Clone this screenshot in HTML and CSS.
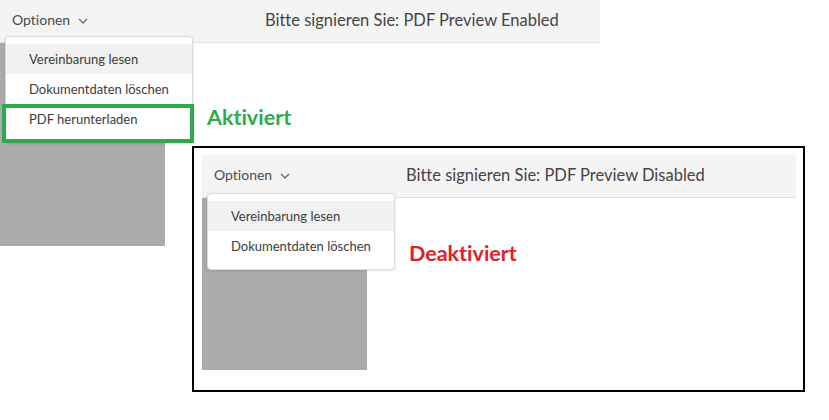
FILE: index.html
```html
<!DOCTYPE html>
<html lang="de">
<head>
<meta charset="utf-8">
<link rel="stylesheet" href="styles.css">
</head>
<body>
<div class="canvas">
  <section class="shot shot-enabled">
    <header class="bar">
      <div class="options">Optionen <svg class="chev" width="10" height="6" viewBox="0 0 10 6"><path d="M1 1 L5 5 L9 1" fill="none" stroke="#666" stroke-width="1.3"/></svg></div>
      <div class="title">Bitte signieren Sie: PDF Preview Enabled</div>
    </header>
    <div class="doc doc-1"></div>
    <ul class="menu menu-1">
      <li class="item hover">Vereinbarung lesen</li>
      <li class="item">Dokumentdaten löschen</li>
      <li class="item">PDF herunterladen</li>
    </ul>
    <div class="highlight"></div>
    <div class="label label-on">Aktiviert</div>
  </section>

  <section class="shot shot-disabled">
    <header class="bar bar-2">
      <div class="options">Optionen <svg class="chev" width="10" height="6" viewBox="0 0 10 6"><path d="M1 1 L5 5 L9 1" fill="none" stroke="#666" stroke-width="1.3"/></svg></div>
      <div class="title">Bitte signieren Sie: PDF Preview Disabled</div>
    </header>
    <div class="doc doc-2"></div>
    <ul class="menu menu-2">
      <li class="item hover">Vereinbarung lesen</li>
      <li class="item">Dokumentdaten löschen</li>
    </ul>
    <div class="label label-off">Deaktiviert</div>
  </section>
</div>
</body>
</html>
```
FILE: styles.css
```css
* { box-sizing: border-box; }
html, body { margin: 0; padding: 0; background: #fff; }
body {
  font-family: Lato, "Noto Sans", sans-serif;
  color: #444;
  font-variant-ligatures: none;
}

.canvas { position: relative; width: 829px; height: 420px; overflow: hidden; }

.shot-enabled { width: 600px; }

.bar {
  display: flex;
  align-items: center;
  height: 43px;
  background: #f4f4f4;
  border-bottom: 1px solid #e2e2e2;
  padding-left: 12px;
}
.options {
  display: flex;
  align-items: center;
  gap: 8px;
  width: 253px;
  font-size: 14px;
  color: #4b4b4b;
  padding-bottom: 3px;
}
.chev { margin-top: 2px; }
.title {
  font-size: 16.5px;
  color: #444;
  padding-bottom: 2px;
}

.doc { background: #ababab; }
.doc-1 { width: 165px; height: 203px; }

.menu {
  position: absolute;
  margin: 0;
  list-style: none;
  background: #fff;
  border: 1px solid #dcdcdc;
  border-radius: 4px;
  box-shadow: 0 1px 3px rgba(0,0,0,0.12);
  padding: 7px 0 8px;
  width: 188px;
}
.menu-1 { left: 5px; top: 36px; }
.item {
  height: 30px;
  line-height: 30px;
  padding-left: 23px;
  font-size: 13px;
  color: #3c3c3c;
}
.item.hover { background: #f1f1f1; }

.highlight {
  position: absolute;
  left: 2px;
  top: 104px;
  width: 192px;
  height: 39px;
  border: 4px solid #2eaa4c;
}

.label {
  position: absolute;
  font-family: Lato, "Liberation Sans", sans-serif;
  font-weight: 700;
  font-size: 21.5px;
}
.label-on { left: 207px; top: 104px; color: #2eaa4c; }

.shot-disabled {
  position: absolute;
  left: 192px;
  top: 146px;
  width: 613px;
  height: 246px;
  border: 2px solid #000;
  padding: 7px 7px 0 8px;
}
.bar-2 { padding-left: 12px; }
.bar-2 .options { width: 192px; }
.doc-2 { width: 165px; height: 172px; }
.menu-2 { left: 13px; top: 45px; }
.label-off { left: 215px; top: 92px; color: #e0202b; }
```
